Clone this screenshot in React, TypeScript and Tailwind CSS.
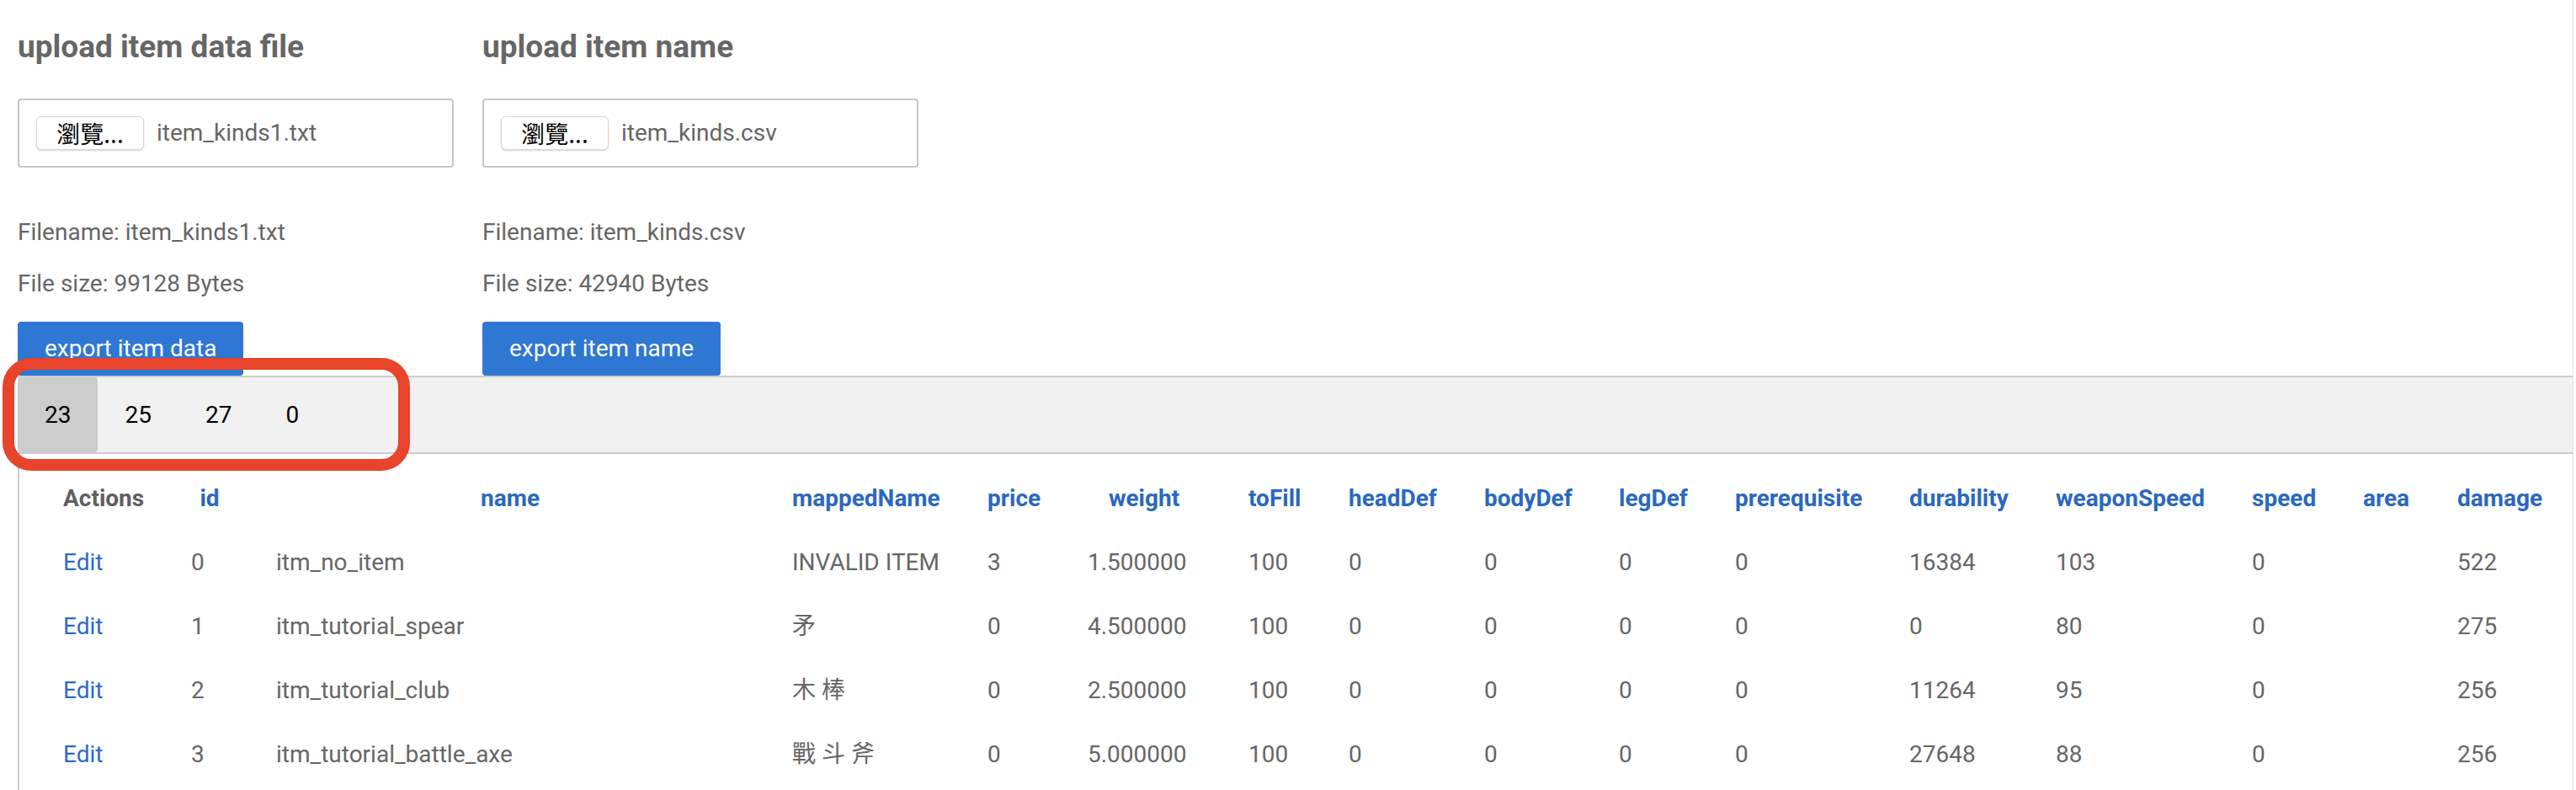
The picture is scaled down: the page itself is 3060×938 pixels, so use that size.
const headers = [
  "Actions",
  "id",
  "name",
  "mappedName",
  "price",
  "weight",
  "toFill",
  "headDef",
  "bodyDef",
  "legDef",
  "prerequisite",
  "durability",
  "weaponSpeed",
  "speed",
  "area",
  "damage"
];

const rows = [
  ["0", "itm_no_item", "INVALID ITEM", "3", "1.500000", "100", "0", "0", "0", "0", "16384", "103", "0", "", "522"],
  ["1", "itm_tutorial_spear", "矛", "0", "4.500000", "100", "0", "0", "0", "0", "0", "80", "0", "", "275"],
  ["2", "itm_tutorial_club", "木 棒", "0", "2.500000", "100", "0", "0", "0", "0", "11264", "95", "0", "", "256"],
  ["3", "itm_tutorial_battle_axe", "戰 斗 斧", "0", "5.000000", "100", "0", "0", "0", "0", "27648", "88", "0", "", "256"]
];

const tabs = ["23", "25", "27", "0"];

const gridCols =
  "grid grid-cols-[95px_44px_556px_175px_62px_134px_62px_104px_103px_81px_150px_117px_176px_75px_55px_101px] gap-x-[57px]";

type UploadBlockProps = {
  title: string;
  file: string;
  size: string;
  action: string;
};

function UploadBlock({ title, file, size, action }: UploadBlockProps) {
  return (
    <div className="flex w-[518px] flex-col pt-[34px]">
      <h3 className="text-[37px] leading-[44px] font-bold text-[#666]">{title}</h3>
      <div className="mt-[39px] flex h-[82px] items-center rounded-[4px] border-2 border-[#c6c6c6] px-[20px]">
        <span className="flex h-[40px] w-[128px] items-center justify-center rounded-[6px] border border-[#d6d6d6] bg-white font-['Noto_Sans_CJK_TC',sans-serif] text-[28px] leading-none text-black shadow-[0_1px_2px_rgba(0,0,0,0.18)]">
          瀏覽...
        </span>
        <span className="ml-[15px] text-[28px] text-[#666]">{file}</span>
      </div>
      <p className="mt-[57px] text-[28px] leading-[40px] text-[#666]">Filename: {file}</p>
      <p className="mt-[21px] text-[28px] leading-[40px] text-[#666]">File size: {size} Bytes</p>
      <button className="mt-[25px] h-[64px] self-start rounded-[4px] bg-[#2e77d3] px-[32px] text-[28px] leading-none text-white">
        {action}
      </button>
    </div>
  );
}

export default function App() {
  return (
    <div className="relative min-h-screen w-[3057px] overflow-hidden border-r border-[#e2e2e2] bg-white font-['Roboto','Noto_Sans_CJK_TC',sans-serif]">
      <div className="flex gap-[34px] pl-[21px]">
        <UploadBlock title="upload item data file" file="item_kinds1.txt" size="99128" action="export item data" />
        <UploadBlock title="upload item name" file="item_kinds.csv" size="42940" action="export item name" />
      </div>

      <div className="ml-[21px] flex border-y-2 border-[#cccccc] bg-[#f1f1f1]">
        {tabs.map((tab, i) => (
          <span
            key={tab}
            className={
              i === 0
                ? "flex h-[89px] items-center rounded-[4px] bg-[#cccccc] px-[32px] text-[28px] text-black"
                : "flex h-[89px] items-center px-[32px] text-[28px] text-black"
            }
          >
            {tab}
          </span>
        ))}
      </div>

      <div className="ml-[21px] min-h-[420px] border-l-2 border-[#cccccc] pt-[15px] pl-[52px]">
        <div className={`${gridCols} h-[76px] items-center`}>
          {headers.map((h, i) => (
            <span
              key={h}
              className={
                i === 0
                  ? "text-center text-[28px] font-bold whitespace-nowrap text-[#5f5f5f]"
                  : "text-center text-[28px] font-bold whitespace-nowrap text-[#2a68bf]"
              }
            >
              {h}
            </span>
          ))}
        </div>
        {rows.map((row) => (
          <div key={row[0]} className={`${gridCols} h-[76px] items-center`}>
            <span className="text-[28px] text-[#2c6cc6]">Edit</span>
            {row.map((cell, j) => (
              <span key={j} className="text-[28px] whitespace-nowrap text-[#666]">
                {cell}
              </span>
            ))}
          </div>
        ))}
      </div>

      <div className="pointer-events-none absolute top-[425px] left-[3px] h-[134px] w-[484px] rounded-[34px] border-[14px] border-[#e8432b]" />
    </div>
  );
}
